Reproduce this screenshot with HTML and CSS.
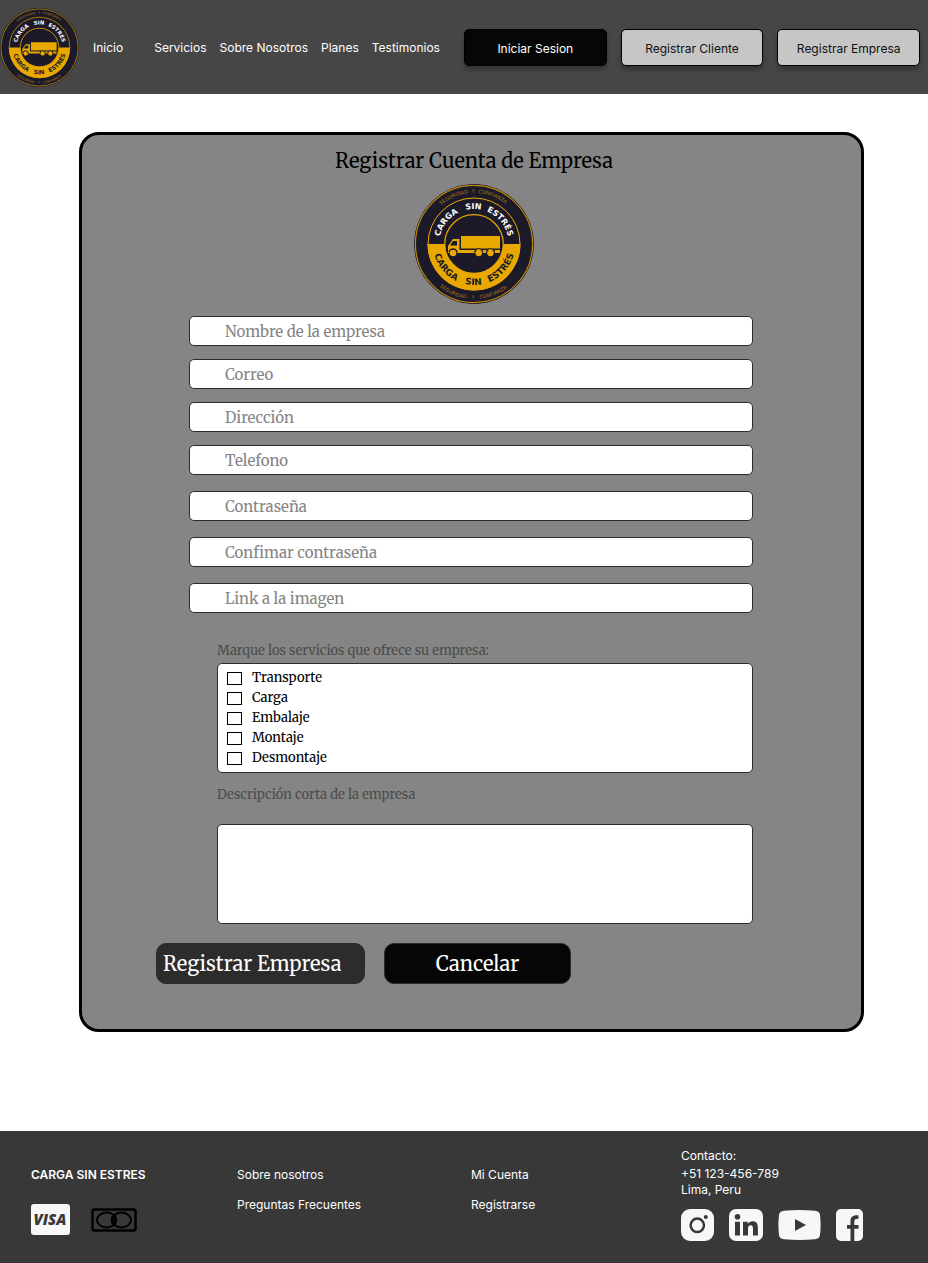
FILE: index.html
```html
<!DOCTYPE html>
<html lang="es">
<head>
<meta charset="utf-8">
<meta name="viewport" content="width=device-width, initial-scale=1">
<title>Registrar Cuenta de Empresa</title>
<link rel="stylesheet" href="styles.css">
</head>
<body>
<svg class="defs" width="0" height="0" aria-hidden="true">
  <symbol id="logo" viewBox="0 0 120 120">
    <path id="arc-top" d="M25 60A35 35 0 0 1 95 60" fill="none"/>
    <path id="arc-bottom" d="M19 60A41 41 0 0 0 101 60" fill="none"/>
    <path id="rim-top" d="M9 60A51 51 0 0 1 111 60" fill="none"/>
    <path id="rim-bottom" d="M5 60A55 55 0 0 0 115 60" fill="none"/>
    <circle cx="60" cy="60" r="59.5" fill="#1c1a28" stroke="#171520"/>
    <circle cx="60" cy="60" r="58.6" fill="none" stroke="#c08a0c" stroke-width="1.2"/>
    <circle cx="60" cy="60" r="46" fill="none" stroke="#e9a800" stroke-width="1"/>
    <path d="M13.5 60A46.5 46.5 0 0 0 106.5 60Z" fill="#e9a800"/>
    <circle cx="60" cy="60" r="29.3" fill="#1c1a28" stroke="#e9a800" stroke-width="1.2"/>
    <g font-family="'DejaVu Sans', sans-serif" font-size="8" font-weight="700" text-anchor="middle">
      <g fill="#fff">
        <text><textPath href="#arc-top" startOffset="21%">CARGA</textPath></text>
        <text><textPath href="#arc-top" startOffset="49.5%">SIN</textPath></text>
        <text><textPath href="#arc-top" startOffset="77.5%">ESTRÉS</textPath></text>
      </g>
      <g fill="#1c1a28" font-size="9">
        <text><textPath href="#arc-bottom" startOffset="22%">CARGA</textPath></text>
        <text><textPath href="#arc-bottom" startOffset="49.5%">SIN</textPath></text>
        <text><textPath href="#arc-bottom" startOffset="77%">ESTRÉS</textPath></text>
      </g>
    </g>
    <g font-family="'DejaVu Sans', sans-serif" font-size="5" font-weight="400" fill="#a87a14" text-anchor="middle">
      <text><textPath href="#rim-top" startOffset="37%">SEGURIDAD</textPath></text>
      <text><textPath href="#rim-top" startOffset="49.5%">Y</textPath></text>
      <text><textPath href="#rim-top" startOffset="62%">CONFIANZA</textPath></text>
      <text><textPath href="#rim-bottom" startOffset="37%">SEGURIDAD</textPath></text>
      <text><textPath href="#rim-bottom" startOffset="49.5%">Y</textPath></text>
      <text><textPath href="#rim-bottom" startOffset="62%">CONFIANZA</textPath></text>
    </g>
    <g fill="#e9a800">
      <path d="M47 52H86V64.5H47Z"/>
      <path d="M39 55H45.5V66H86V69H81Q80.5 64.8 76.5 64.8T72 69H69Q68.5 64.8 64.7 64.8T60.5 69H43.5Q43 64.8 39 64.8T34.8 69H34V62Z"/>
      <circle cx="39" cy="69" r="3.3"/><circle cx="64.7" cy="69" r="3.3"/><circle cx="76.5" cy="69" r="3.3"/>
    </g>
    <path d="M39 57H43V61.5H36Z" fill="#1c1a28"/>
    <path d="M34.8 68Q35.5 64.6 39 64.6T43.2 68M60.5 68Q61.2 64.6 64.7 64.6T69 68M72.2 68Q73 64.6 76.5 64.6T80.8 68" fill="none" stroke="#1c1a28" stroke-width=".9"/>
  </symbol>
</svg>

<header class="header">
  <a class="header-logo" href="#" aria-label="Carga Sin Estrés"><svg viewBox="0 0 120 120"><use href="#logo"/></svg></a>
  <nav class="nav">
    <a class="nav-home" href="#">Inicio</a>
    <a href="#">Servicios</a>
    <a href="#">Sobre Nosotros</a>
    <a href="#">Planes</a>
    <a href="#">Testimonios</a>
  </nav>
  <div class="actions">
    <button class="action action-dark" type="button">Iniciar Sesion</button>
    <button class="action" type="button">Registrar Cliente</button>
    <button class="action" type="button">Registrar Empresa</button>
  </div>
</header>

<main class="main">
  <form class="card">
    <div class="card-head">
      <h1 class="title">Registrar Cuenta de Empresa</h1>
      <svg class="card-logo" viewBox="0 0 120 120" role="img" aria-label="Carga Sin Estrés"><use href="#logo"/></svg>
    </div>

    <div class="fields">
      <input class="field" type="text" aria-label="Nombre de la empresa" placeholder="Nombre de la empresa">
      <input class="field" type="email" aria-label="Correo" placeholder="Correo">
      <input class="field" type="text" aria-label="Dirección" placeholder="Dirección">
      <input class="field" type="tel" aria-label="Telefono" placeholder="Telefono">
    </div>
    <div class="fields fields-loose">
      <input class="field" type="password" aria-label="Contraseña" placeholder="Contraseña">
      <input class="field" type="password" aria-label="Confimar contraseña" placeholder="Confimar contraseña">
      <input class="field" type="url" aria-label="Link a la imagen" placeholder="Link a la imagen">
    </div>

    <div class="details">
      <p class="label" id="services-label">Marque los servicios que ofrece su empresa:</p>
      <div class="services" role="group" aria-labelledby="services-label">
        <label class="service"><input class="check" type="checkbox">Transporte</label>
        <label class="service"><input class="check" type="checkbox">Carga</label>
        <label class="service"><input class="check" type="checkbox">Embalaje</label>
        <label class="service"><input class="check" type="checkbox">Montaje</label>
        <label class="service"><input class="check" type="checkbox">Desmontaje</label>
      </div>
      <label class="label label-description" for="description">Descripción corta de la empresa</label>
      <textarea class="description" id="description"></textarea>
    </div>

    <div class="buttons">
      <button class="submit" type="submit">Registrar Empresa</button>
      <button class="cancel" type="button">Cancelar</button>
    </div>
  </form>
</main>

<footer class="footer">
  <div class="footer-col">
    <strong class="brand">CARGA SIN ESTRES</strong>
    <div class="cards">
      <svg width="39" height="31" viewBox="0 0 39 31" role="img" aria-label="Visa">
        <rect width="39" height="31" rx="3" fill="#f7f7f7"/>
        <text x="19" y="21" text-anchor="middle" font-family="'Open Sans', sans-serif" font-size="15" font-weight="800" font-style="italic" fill="#383838">VISA</text>
      </svg>
      <svg width="46" height="24" viewBox="0 0 46 24" role="img" aria-label="Mastercard" fill="none" stroke="#000">
        <rect x="1.5" y="1.5" width="43" height="21" rx="2" stroke-width="2.5"/>
        <ellipse cx="15.5" cy="12" rx="9.5" ry="7.5" stroke-width="2"/>
        <ellipse cx="30.5" cy="12" rx="9.5" ry="7.5" stroke-width="2"/>
        <path d="M23 6.5Q27.500 12 23 17.500M20 14.500H24.500M19.500 12H25M20 9.500H24.500" stroke-width="1.8"/>
      </svg>
    </div>
  </div>
  <nav class="footer-col">
    <a href="#">Sobre nosotros</a>
    <a href="#">Preguntas Frecuentes</a>
  </nav>
  <nav class="footer-col">
    <a href="#">Mi Cuenta</a>
    <a href="#">Registrarse</a>
  </nav>
  <div class="contact">
    <p class="contact-title">Contacto:</p>
    <p>+51 123-456-789</p>
    <p>Lima, Peru</p>
    <div class="social">
      <a href="#" aria-label="Instagram"><svg width="33" height="32" viewBox="0 0 33 32">
        <rect width="33" height="32" rx="9" fill="#f7f7f7"/>
        <circle cx="16.3" cy="16.3" r="6.7" fill="none" stroke="#383838" stroke-width="2.5"/>
        <circle cx="24.8" cy="8" r="2" fill="#383838"/></svg></a>
      <a href="#" aria-label="LinkedIn"><svg width="34" height="32" viewBox="0 0 34 32">
        <rect width="34" height="32" rx="7" fill="#f7f7f7"/>
        <circle cx="8.5" cy="7.8" r="2.8" fill="#383838"/>
        <path d="M6 12.7H11V26.5H6ZM14 12.7H18.7V14.8Q20.2 12.3 23.5 12.3C27.7 12.3 28.9 15 28.9 19V26.5H24V20C24 17.7 23.5 16.3 21.6 16.3S19 17.7 19 20V26.5H14Z" fill="#383838"/></svg></a>
      <a href="#" aria-label="YouTube"><svg width="43" height="30" viewBox="0 0 43 30">
        <path d="M6 .8Q21.5-.6 37 .8Q41.5 1.2 42 5Q43.2 15 42 25Q41.5 28.8 37 29.2Q21.5 30.6 6 29.2Q1.5 28.8 1 25Q-.2 15 1 5Q1.5 1.2 6 .8Z" fill="#f7f7f7"/>
        <path d="M17 9L28 15L17 21Z" fill="#383838"/></svg></a>
      <a href="#" aria-label="Facebook"><svg width="27" height="32" viewBox="0 0 27 32">
        <rect width="27" height="32" rx="5" fill="#f7f7f7"/>
        <path d="M14.5 32V19.8H11V16H14.5V12C14.5 7.8 17 6 22.5 6.3V9.7C19.5 9.6 18.3 10.2 18.3 12.5V16H22.5V19.8H18.3V32Z" fill="#383838"/></svg></a>
    </div>
  </div>
</footer>
</body>
</html>
```

FILE: styles.css
```css
* {
  box-sizing: border-box;
}

body {
  margin: 0;
  background: #fff;
  font-family: Inter, sans-serif;
  font-size: 12px;
  line-height: 16px;
}

a {
  color: inherit;
  text-decoration: none;
}

p {
  margin: 0;
}

svg {
  display: block;
}

.defs {
  position: absolute;
}

.header {
  display: flex;
  align-items: center;
  min-height: 94px;
  padding-right: 8px;
  background: #464646;
  color: #fff;
}

.header-logo {
  flex: none;
  width: 79px;
}

.nav {
  display: flex;
  flex: none;
  gap: 13px;
  margin: 0 24px 0 14px;
  padding-top: 2px;
  line-height: 18px;
}

.nav-home {
  margin-right: 18px;
}

.actions {
  display: flex;
  flex: 1;
  gap: 14px;
}

.action {
  flex: 1 1 0;
  min-height: 37px;
  padding: 4px 0 0;
  border: 1px solid #000;
  border-radius: 5px;
  background: #c6c6c6;
  box-shadow: 0 4px 4px rgba(0, 0, 0, .25);
  color: #111;
  font: inherit;
  white-space: nowrap;
}

.action-dark {
  background: #060606;
  color: #fff;
}

.main {
  padding: 38px 64px 99px 79px;
}

.card {
  padding: 12px 108px 45px 107px;
  border: 3px solid #000;
  border-radius: 20px;
  background: #858585;
  font-family: Merriweather, "DejaVu Serif Condensed", "DejaVu Serif", serif;
  font-optical-sizing: none;
}

.card-head {
  padding-left: 6px;
}

.title {
  margin: 0 0 9px;
  font-size: 20px;
  font-weight: 400;
  line-height: 28px;
  text-align: center;
}

.card-logo {
  width: 120px;
  margin: 0 auto 12px;
}

.fields {
  display: grid;
  gap: 13px;
}

.fields-loose {
  gap: 16px;
  margin-top: 16px;
}

.field {
  width: 100%;
  height: 30px;
  padding: 0 35px;
  border: 1px solid #2c2c2c;
  border-radius: 5px;
  background: #fff;
  color: #000;
  font: inherit;
  font-size: 15px;
}

.field::placeholder {
  color: #858585;
  opacity: 1;
}

.details {
  margin: 28px 0 19px 28px;
}

.label {
  display: block;
  color: #4c4c4c;
  font-size: 13px;
  line-height: 20px;
}

.services {
  display: grid;
  gap: 4px;
  margin: 2px 0 12px;
  padding: 6px 9px;
  border: 1px solid #2c2c2c;
  border-radius: 5px;
  background: #fff;
}

.service {
  display: flex;
  align-items: center;
  gap: 10px;
  width: max-content;
  font-size: 13px;
  line-height: 16px;
}

.check {
  width: 15px;
  height: 13px;
  margin: 0;
  border: 1px solid #000;
  background: #fff;
  appearance: none;
}

.check:checked {
  background: #000;
}

.label-description {
  margin-bottom: 19px;
}

.description {
  display: block;
  width: 100%;
  height: 100px;
  padding: 8px;
  border: 1px solid #2c2c2c;
  border-radius: 5px;
  background: #fff;
  font: inherit;
  resize: none;
}

.buttons {
  display: flex;
  gap: 19px;
  margin-left: -33px;
}

.submit,
.cancel {
  flex: 0 1 209px;
  height: 41px;
  padding: 0 6px;
  border: 1px solid #2c2c2c;
  border-radius: 10px;
  background: #2c2c2c;
  color: #fff;
  font: inherit;
  font-size: 20px;
  text-align: left;
  white-space: nowrap;
}

.cancel {
  flex-basis: 187px;
  background: #060606;
  text-align: center;
}

.footer {
  display: grid;
  grid-template-columns: 206fr 234fr 210fr 216fr;
  min-height: 132px;
  padding: 17px 31px 20px;
  background: #383838;
  color: #fff;
}

.footer-col {
  display: flex;
  flex-direction: column;
  gap: 14px;
  padding-top: 19px;
}

.brand {
  font-weight: 600;
}

.cards {
  display: flex;
  align-items: center;
  gap: 21px;
  margin-top: 7px;
}

.contact-title {
  margin-bottom: 2px;
}

.social {
  display: flex;
  align-items: center;
  gap: 15px;
  margin-top: 11px;
}
```
